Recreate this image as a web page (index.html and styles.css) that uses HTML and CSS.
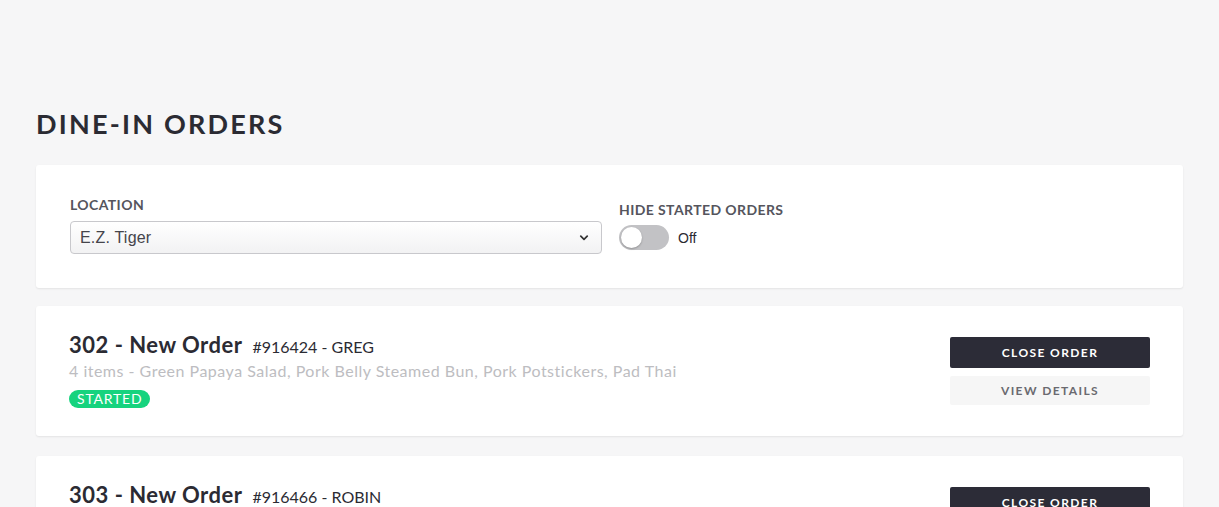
FILE: index.html
```html
<!DOCTYPE html>
<html>
<head>
<meta charset="utf-8">
<link rel="stylesheet" href="styles.css">
</head>
<body>
<main class="page">
  <h1 class="title">DINE-IN ORDERS</h1>
  <section class="card filters">
    <div class="field location">
      <label class="label">LOCATION</label>
      <div class="select">
        <span class="select-text">E.Z. Tiger</span>
        <svg class="chev" width="10" height="6" viewBox="0 0 10 6"><path d="M1.8 1.2 L5 4.4 L8.2 1.2" fill="none" stroke="#333" stroke-width="1.7" stroke-linecap="round" stroke-linejoin="round"/></svg>
      </div>
    </div>
    <div class="field hide">
      <label class="label">HIDE STARTED ORDERS</label>
      <div class="toggle-row">
        <span class="toggle"><span class="knob"></span></span>
        <span class="off">Off</span>
      </div>
    </div>
  </section>

  <section class="card order">
    <div class="order-info">
      <div class="order-head"><span class="order-name">302 - New Order</span><span class="order-num">#916424 - GREG</span></div>
      <div class="order-items">4 items - Green Papaya Salad, Pork Belly Steamed Bun, Pork Potstickers, Pad Thai</div>
      <span class="badge">STARTED</span>
    </div>
    <div class="actions">
      <button class="btn btn-dark">CLOSE ORDER</button>
      <button class="btn btn-light">VIEW DETAILS</button>
    </div>
  </section>

  <section class="card order">
    <div class="order-info">
      <div class="order-head"><span class="order-name">303 - New Order</span><span class="order-num">#916466 - ROBIN</span></div>
      <div class="order-items">3 items - Pad Thai, Green Curry, Spring Rolls</div>
      <span class="badge">STARTED</span>
    </div>
    <div class="actions">
      <button class="btn btn-dark">CLOSE ORDER</button>
      <button class="btn btn-light">VIEW DETAILS</button>
    </div>
  </section>
</main>
</body>
</html>
```

FILE: styles.css
```css
html, body {
  margin: 0;
  padding: 0;
  background: #f6f6f7;
  height: 100%;
  overflow: hidden;
}
body {
  font-family: "Lato", "Liberation Sans", sans-serif;
  color: #2b2b33;
}
.page {
  padding: 107px 36px 0 36px;
  display: flex;
  flex-direction: column;
}
.title {
  margin: 0 0 24px 0;
  font-size: 27px;
  font-weight: 700;
  letter-spacing: 2.2px;
  line-height: 34px;
  color: #2b2b33;
}
.card {
  background: #fff;
  border-radius: 3px;
  box-shadow: 0 1px 2px rgba(0,0,0,0.08);
}
.filters {
  height: 123px;
  box-sizing: border-box;
  padding: 31px 34px 0 34px;
  display: flex;
  gap: 17px;
  margin-bottom: 18px;
}
.field { display: flex; flex-direction: column; }
.location { width: 532px; }
.label {
  font-size: 14px;
  font-weight: 700;
  color: #55555d;
  letter-spacing: 0.4px;
  line-height: 18px;
  margin-bottom: 7px;
}
.hide .label { margin-top: 5px; margin-bottom: 6px; }
.select {
  height: 33px;
  box-sizing: border-box;
  border: 1px solid #c8c8cc;
  border-radius: 4px;
  background: linear-gradient(#ffffff, #f2f2f3);
  display: flex;
  align-items: center;
  justify-content: space-between;
  padding: 0 12px 0 9px;
}
.select-text {
  font-family: "Liberation Sans", Arial, sans-serif;
  font-size: 16px;
  letter-spacing: 0.2px;
  color: #45454b;
}
.toggle-row { display: flex; align-items: center; gap: 9px; }
.toggle {
  width: 50px;
  height: 25px;
  border-radius: 13px;
  background: #c2c2c5;
  display: flex;
  align-items: center;
  padding-left: 2px;
  box-sizing: border-box;
}
.knob {
  width: 21px;
  height: 21px;
  border-radius: 50%;
  background: #fff;
  box-shadow: 0 1px 2px rgba(0,0,0,0.25);
}
.off {
  font-family: "Liberation Sans", Arial, sans-serif;
  font-size: 14px;
  color: #2b2b33;
  margin-top: 1px;
}
.order {
  height: 130px;
  box-sizing: border-box;
  padding: 26px 33px 0 33px;
  display: flex;
  justify-content: space-between;
  margin-bottom: 20px;
}
.order-info { display: flex; flex-direction: column; align-items: flex-start; }
.order-head { display: flex; align-items: baseline; gap: 10px; line-height: 26px; }
.order-name { font-size: 22px; font-weight: 700; letter-spacing: 0.5px; color: #2b2b33; }
.order-num { font-size: 16px; color: #2b2b33; }
.order-items {
  font-size: 16px;
  letter-spacing: 0.5px;
  color: #bdbdc1;
  line-height: 20px;
  margin-top: 1px;
}
.badge {
  display: inline-block;
  margin-top: 9px;
  background: #16d37e;
  color: #fff;
  font-size: 14px;
  letter-spacing: 0.8px;
  line-height: 18px;
  padding: 0 8px;
  border-radius: 9px;
}
.actions {
  display: flex;
  flex-direction: column;
  gap: 8px;
  padding-top: 5px;
}
.btn {
  width: 200px;
  border: none;
  border-radius: 2px;
  font-family: "Lato", "Liberation Sans", sans-serif;
  font-size: 12px;
  font-weight: 700;
  letter-spacing: 1.4px;
}
.btn-dark { height: 31px; background: #2c2c37; color: #fff; }
.btn-light { height: 29px; background: #f6f6f6; color: #6a6a70; }
```
